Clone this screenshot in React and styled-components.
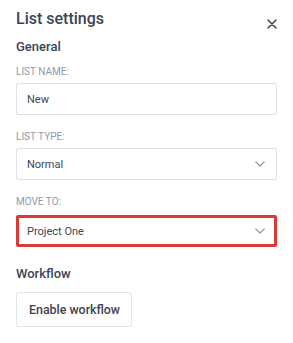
import React from "react";
import styled, { createGlobalStyle } from "styled-components";

const Global = createGlobalStyle`
  html, body { margin: 0; padding: 0; background: #ffffff; }
  body { font-family: Roboto, "Liberation Sans", sans-serif; -webkit-font-smoothing: antialiased; }
  * { box-sizing: border-box; }
`;

const Panel = styled.div`
  width: 293px;
  height: 343px;
  padding: 9px 16px 0 16px;
  display: flex;
  flex-direction: column;
  color: #3b4454;
`;

const Header = styled.div`
  display: flex;
  align-items: flex-start;
  justify-content: space-between;
  height: 20px;
`;

const Title = styled.h1`
  margin: 0;
  font-size: 16px;
  line-height: 20px;
  font-weight: 500;
  color: #3b4454;
`;

const CloseButton = styled.button`
  border: none;
  background: none;
  padding: 0;
  margin: 9px -0.5px 0 0;
  width: 12px;
  height: 12px;
  display: flex;
  align-items: center;
  justify-content: center;
  cursor: pointer;
`;

const SectionTitle = styled.h2`
  margin: ${(p) => p.$top}px 0 0 0;
  font-size: 13px;
  line-height: 16px;
  font-weight: 500;
  color: #3b4454;
`;

const Field = styled.div`
  display: flex;
  flex-direction: column;
  margin-top: ${(p) => p.$top}px;
`;

const Label = styled.label`
  font-size: 10px;
  line-height: 12px;
  color: #8d99aa;
  text-transform: uppercase;
  margin-bottom: 5px;
`;

const Control = styled.div`
  height: 32px;
  width: 261px;
  margin-top: ${(p) => (p.$highlight ? 2 : 0)}px;
  border: ${(p) => (p.$highlight ? "3px solid #d93a36" : "1px solid #dde1e8")};
  border-radius: 2px;
  display: flex;
  align-items: center;
  justify-content: space-between;
  padding: 0 ${(p) => (p.$highlight ? 9 : 11)}px 0 ${(p) => (p.$highlight ? 8 : 10)}px;
  font-size: 11px;
  color: #3d4656;
  background: #fff;
`;

const Button = styled.button`
  margin-top: 10px;
  align-self: flex-start;
  height: 35px;
  padding: 0 11px 0 12px;
  border: 1px solid #e2e5eb;
  border-radius: 2px;
  background: #fff;
  font-family: Roboto, "Liberation Sans", sans-serif;
  font-size: 12.4px;
  font-weight: 500;
  color: #3b4454;
`;

const Chevron = () => (
  <svg width="10" height="6" viewBox="0 0 10 6" fill="none">
    <path d="M0.8 0.8 L5 5 L9.2 0.8" stroke="#8a95a6" strokeWidth="1.2" strokeLinecap="round" strokeLinejoin="round" />
  </svg>
);

const CloseIcon = () => (
  <svg width="10" height="10" viewBox="0 0 10 10" fill="none">
    <path d="M1 1 L9 9 M9 1 L1 9" stroke="#3d4653" strokeWidth="1.6" strokeLinecap="round" />
  </svg>
);

export default function App() {
  return (
    <>
      <Global />
      <Panel>
        <Header>
          <Title>List settings</Title>
          <CloseButton aria-label="Close">
            <CloseIcon />
          </CloseButton>
        </Header>
        <SectionTitle $top={10}>General</SectionTitle>
        <Field $top={11}>
          <Label>List name:</Label>
          <Control>New</Control>
        </Field>
        <Field $top={16}>
          <Label>List type:</Label>
          <Control>
            <span>Normal</span>
            <Chevron />
          </Control>
        </Field>
        <Field $top={16}>
          <Label>Move to:</Label>
          <Control $highlight>
            <span>Project One</span>
            <Chevron />
          </Control>
        </Field>
        <SectionTitle $top={19}>Workflow</SectionTitle>
        <Button>Enable workflow</Button>
      </Panel>
    </>
  );
}
